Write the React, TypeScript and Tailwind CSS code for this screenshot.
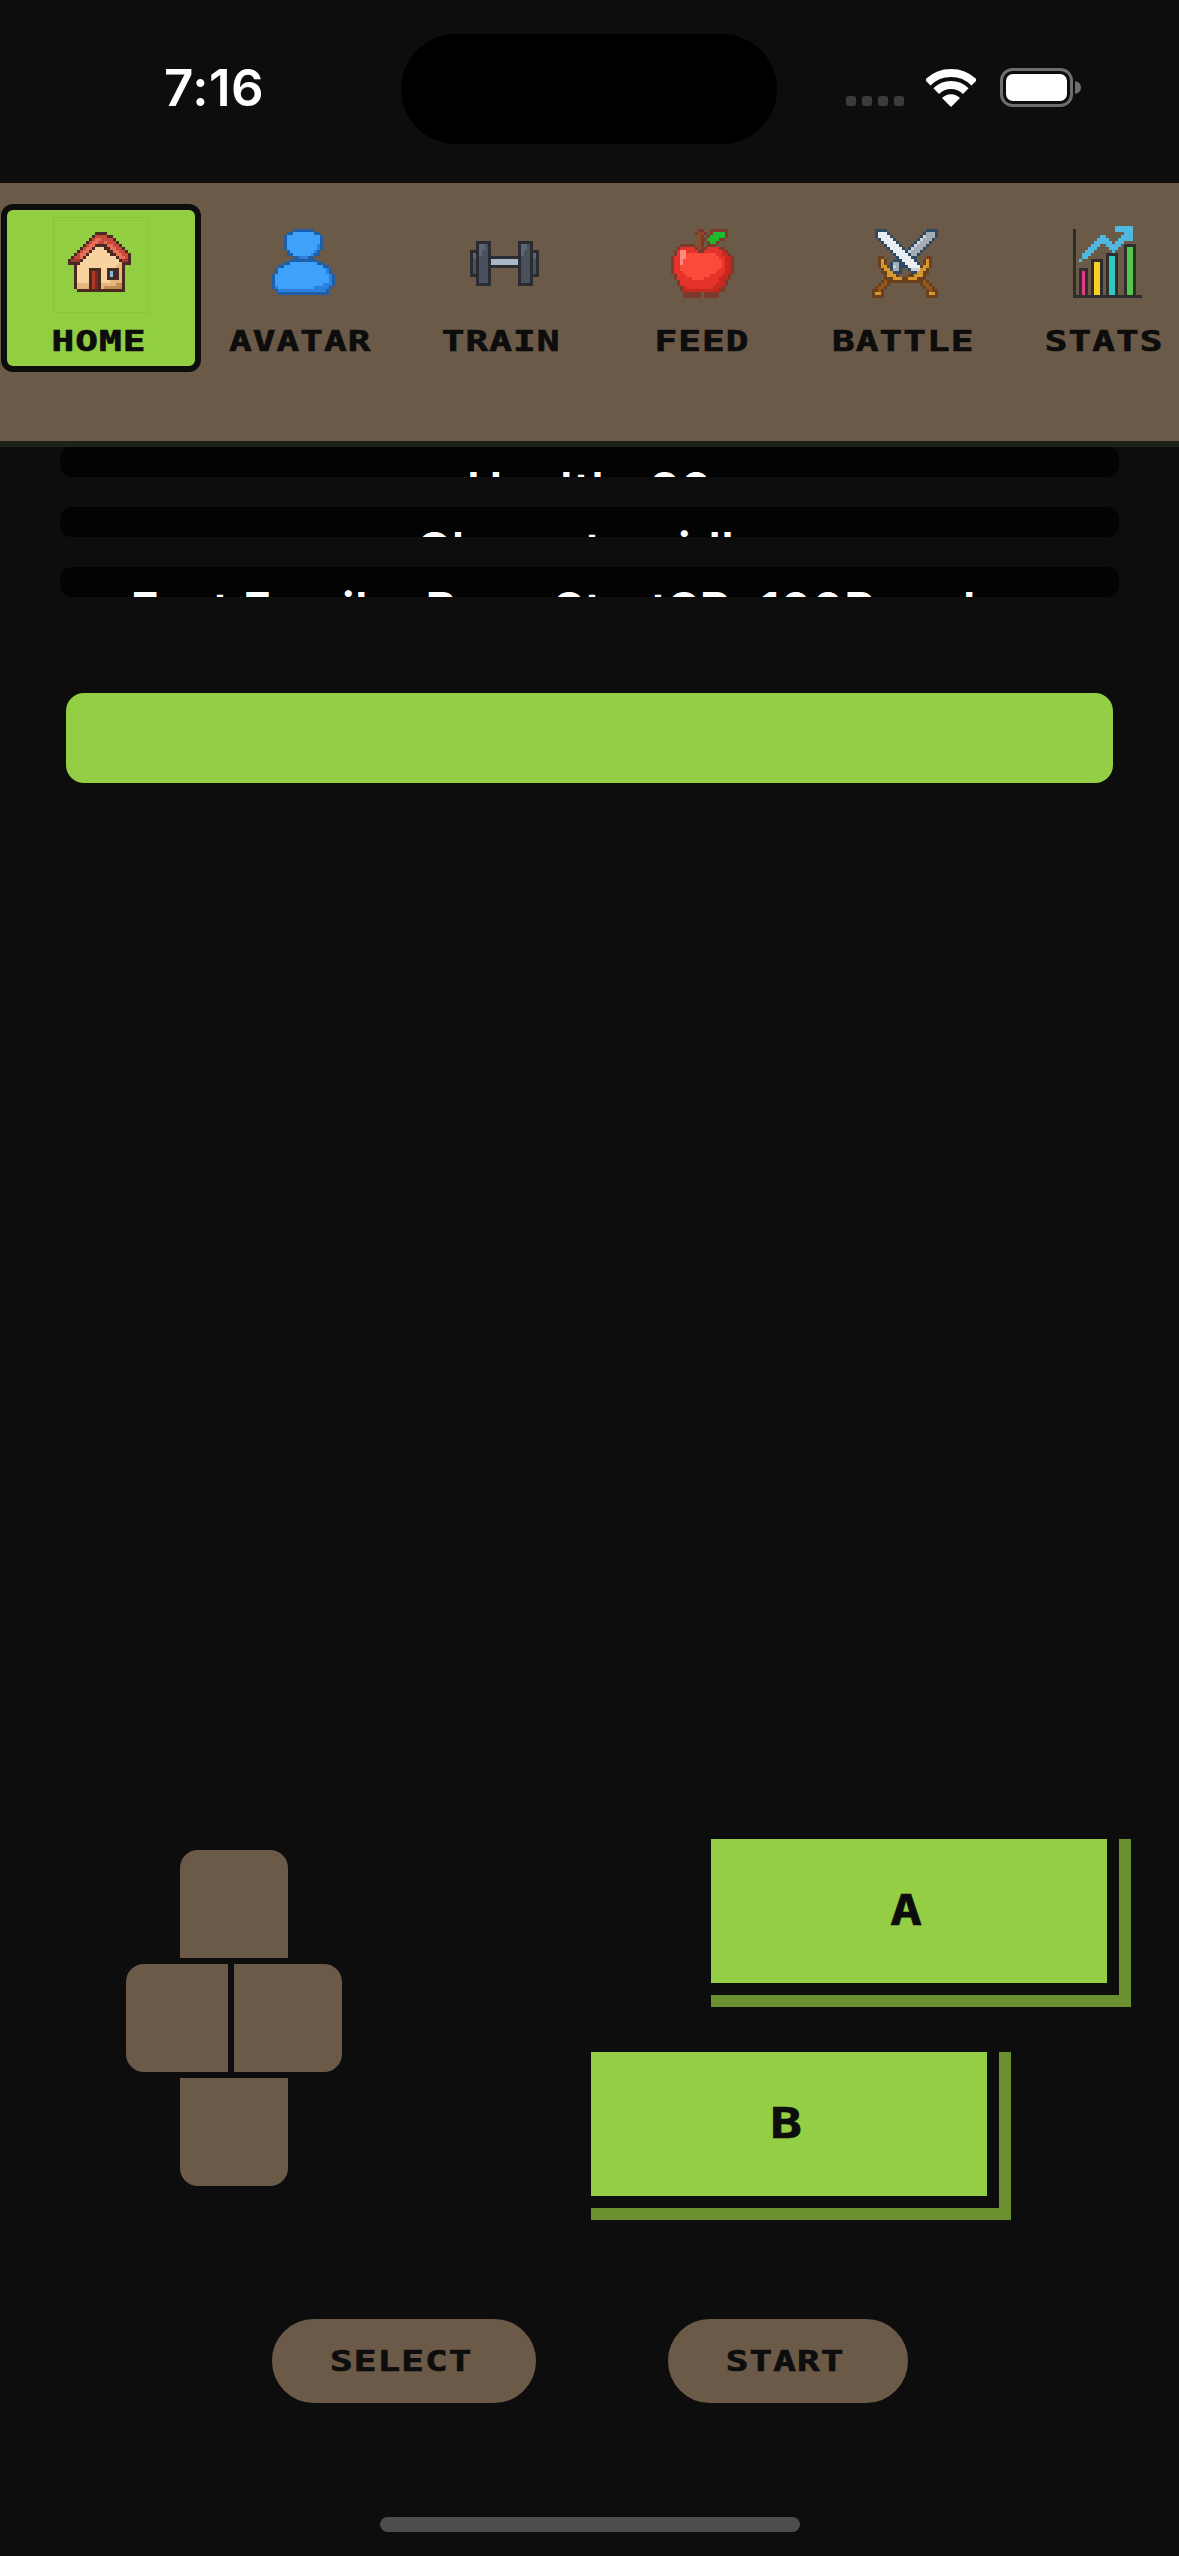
const pixelFont = "font-['DejaVu_Sans_Mono',monospace] font-bold [-webkit-text-stroke:0.7px_#0d0d0d]";

type Art = { left: number; top: number; colors: Record<string, string>; rows: string[] };

const home: Art = {
  left: 5,
  top: 5,
  colors: { k: '#4a2a20', r: '#c8493a', R: '#e8705a', d: '#9c3a2c', c: '#f8d3a0', C: '#e6b67c', b: '#c08a55', w: '#7cc0e8', D: '#b03a2a', e: '#7a2a20' },
  rows: [
    '.........kkkk........',
    '........krrrrkk......',
    '.......krRRrrrrk.....',
    '......krRRrrRrrrk....',
    '.....krRRkkkkRRrrk...',
    '....krRRkccckkRRrrk..',
    '...krRRkccccckkRRrrk.',
    '..krRRkccccccckkRRrrk',
    '.krrRkcccccccccckRRrk',
    'kdddkcccccccccccckddk',
    'kkkkcccccccccccccCkkk',
    '..kcccccccccccccCCk..',
    '..kcccckkkkcckkkkCk..',
    '..kcccckDekcckwkkCk..',
    '..kcccckDekcckwkkCk..',
    '..kcccckDekcckkkkCk..',
    '..kcccckDekcccCCCCk..',
    '..kCCCCkDekCCCCCbbk..',
    '..kCCCCkDekCbbbbbbk..',
    '...kkkkkkkkkkkkkkkk..',
  ],
};

const avatar: Art = {
  left: 6,
  top: 4,
  colors: { k: '#1e5fa8', F: '#3fa2fa', s: '#2a80dc' },
  rows: [
    '.......kkkkkkk.......',
    '.....kkFFFFFFFkk.....',
    '....kFFFFFFFFFFFk....',
    '....kFFFFFFFFFFFk....',
    '....kFFFFFFFFFFFk....',
    '....kFFFFFFFFFFsk....',
    '....kFFFFFFFFFFsk....',
    '.....kFFFFFFFFsk.....',
    '.....kkFFFFFFskk.....',
    '.......kkssskk.......',
    '......kkkkkkkkk......',
    '....kkFFFFFFFFFkk....',
    '..kkFFFFFFFFFFFFFkk..',
    '.kFFFFFFFFFFFFFFFFsk.',
    '.kFFFFFFFFFFFFFFFFsk.',
    'kFFFFFFFFFFFFFFFFFFsk',
    'kFFFFFFFFFFFFFFFFFFsk',
    'kFFFFFFFFFFFFFFFFFFsk',
    'kFFFFFFFFFFFFFFFFsssk',
    'ksFFFFFFFFFFFFsssssk.',
    '.kssssssssssssssssk..',
    '..kkkkkkkkkkkkkkkkk..',
  ],
};

const dumbbell: Art = {
  left: 5,
  top: 8,
  colors: { k: '#2a2c31', g: '#4a505c', h: '#5e6674', b: '#a8b8c8', m: '#5c6470' },
  rows: [
    '..kkkkk.........kkkkk..',
    '..khhgk.........khhgk..',
    '..khhgk.........khhgk..',
    'kkkhggk.........khggkkk',
    'kmkhggk.........khggkmk',
    'kmkgggkkkkkkkkkkkgggkmk',
    'kgkgggkbbbbbbbbbkgggkgk',
    'kgkgggkbbbbbbbbbkgggkgk',
    'kgkgggkkkkkkkkkkkgggkgk',
    'kgkgggk.........kgggkgk',
    'kgkgggk.........kgggkgk',
    'kkkgggk.........kgggkkk',
    '..kgggk.........kgggk..',
    '..kgggk.........kgggk..',
    '..kkkkk.........kkkkk..',
  ],
};

const apple: Art = {
  left: 5,
  top: 4,
  colors: { o: '#7a3a2c', S: '#8f4a26', L: '#1fb82e', r: '#e5322a', B: '#fb4a3a', W: '#fb8a80', d: '#c4281f' },
  rows: [
    '.........oo..oooooo..',
    '........oSSo.oLLLLo..',
    '.........So.oLLLLLo..',
    '.........SooLLLLoo...',
    '.........So.oLLo.....',
    '...ooooo.So.ooo......',
    '..orrrrroSoorrrroo...',
    '.orWWrrrroorrrrrrdo..',
    '.orWWBBBBBBBBBBrrddo.',
    'orrWWBBBBBBBBBBBrrddo',
    'orrWBBBBBBBBBBBBBrddo',
    'orrWBBBBBBBBBBBBBrddo',
    'orrBBBBBBBBBBBBBBrddo',
    'orrBBBBBBBBBBBBBrrddo',
    'orrrBBBBBBBBBBBrrrddo',
    '.orrrBBBBBBBBrrrrddo.',
    '.orrrrrBBBBrrrrrdddo.',
    '..orrrrrrrrrrrrrddo..',
    '..orrrrrrrrrrrrdddo..',
    '...odrrrrrrrrrdddo...',
    '...oddddddddddddoo...',
    '....oooooo.ooooo.....',
    '....oooooo.ooooo.....',
  ],
};

const swords: Art = {
  left: 5,
  top: 4,
  colors: { n: '#2f4a60', W: '#e8eef2', s: '#a4acb6', l: '#c8d0d8', O: '#d89830', B: '#6a3f1c', b: '#94561f' },
  rows: [
    '.nnnn.............nnnn.',
    '.nWWWn...........nsssn.',
    '.nWWWWn.........nlsssn.',
    '..nWWWWn.......nlsssn..',
    '...nWWWWn.....nlsssn...',
    '....nWWWWn...nlsssn....',
    '.....nWWWWn.nlsssn.....',
    '......nWWWWnlsssn......',
    '.......nWWWWnssn.......',
    '..BB....nWWWWnn...BB...',
    '..BOB..nnnWWWWn..BOB...',
    '..BOB.nssnnWWWWn.BOB...',
    '..BOOBnlsnnnWWWWBOOB...',
    '...BOOnssn..nlllOOB....',
    '...BBOOnnn...nnOOBB....',
    '....BOOOB...BBOOOB.....',
    '....BBBOOOBBOOOBBB.....',
    '...BbBBBBBBBBBBBBbB....',
    '..BbbB..........BbbB...',
    '.BbbB............BbbB..',
    'BBbB..............BbBB.',
    'BOOB..............BOOB.',
    'BBBB..............BBBB.',
  ],
};

const stats: Art = {
  left: 5,
  top: 3,
  colors: { k: '#2e2e2e', A: '#50b8e0', P: '#e83888', Y: '#f8d020', T: '#30c8c0', G: '#50c848' },
  rows: [
    '..............AAAAAA...',
    'k.............AAAAAA...',
    'k................AAA...',
    'k........AA.....AAAA...',
    'k.......AAAA...AAAAA...',
    'k......AAAAAA.AAA......',
    'k.....AAA..AAAAA.kkkk..',
    'k....AAA....AAA..kGGk..',
    'k...AAA......A...kGGk..',
    'k..AAA.....kkkk..kGGk..',
    'k..AA......kTTk..kGGk..',
    'k.A...kkkk.kTTk..kGGk..',
    'k.....kYYk.kTTk..kGGk..',
    'k.....kYYk.kTTk..kGGk..',
    'k.kkk.kYYk.kTTk..kGGk..',
    'k.kPk.kYYk.kTTk..kGGk..',
    'k.kPk.kYYk.kTTk..kGGk..',
    'k.kPk.kYYk.kTTk..kGGk..',
    'k.kPk.kYYk.kTTk..kGGk..',
    'k.kPk.kYYk.kTTk..kGGk..',
    'k.kPk.kYYk.kTTk..kGGk..',
    'k.kPk.kYYk.kTTk..kGGk..',
    'k.kPk.kYYk.kTTk..kGGk..',
    'kkkkkkkkkkkkkkkkkkkkkkk',
  ],
};

function PixelIcon({ art }: { art: Art }) {
  const cells: React.ReactNode[] = [];
  art.rows.forEach((row, y) => {
    let x = 0;
    while (x < row.length) {
      let end = x + 1;
      while (end < row.length && row[end] === row[x]) end++;
      if (row[x] !== '.') {
        cells.push(<rect key={`${y}-${x}`} x={art.left + x} y={art.top + y} width={end - x} height={1} fill={art.colors[row[x]]} />);
      }
      x = end;
    }
  });
  return (
    <svg viewBox="0 0 32 32" width="96" height="96" shapeRendering="crispEdges">
      {cells}
    </svg>
  );
}

const tabs = [
  { label: 'HOME', art: home },
  { label: 'AVATAR', art: avatar },
  { label: 'TRAIN', art: dumbbell },
  { label: 'FEED', art: apple },
  { label: 'BATTLE', art: swords },
  { label: 'STATS', art: stats },
];

const infoRows = ['Health: 80', 'Character: idle', 'Fast Family: Base StartSP: 100P and up'];

function StatusBar() {
  return (
    <div className="flex h-[183px] shrink-0 items-start">
      <div className="ml-[164px] mt-[58px] w-[237px] font-['Inter',sans-serif] text-[51px] font-semibold leading-[60px] tracking-[0.5px] text-white">7:16</div>
      <div className="mt-[34px] h-[110px] w-[376px] rounded-[55px] bg-black" />
      <div className="ml-[69px] mt-[68px] flex items-end">
        <div className="mb-[1px] flex gap-[6px]">
          <div className="h-[10px] w-[10px] rounded-[3px] bg-[#3c3c3c]" />
          <div className="h-[10px] w-[10px] rounded-[3px] bg-[#3c3c3c]" />
          <div className="h-[10px] w-[10px] rounded-[3px] bg-[#3c3c3c]" />
          <div className="h-[10px] w-[10px] rounded-[3px] bg-[#3c3c3c]" />
        </div>
        <svg className="ml-[22px]" width="50" height="38" viewBox="0 0 50 38">
          <path d="M1.7 13.7 A33 33 0 0 1 48.3 13.7" fill="none" stroke="#fff" strokeWidth="8" />
          <path d="M10.2 22.2 A21 21 0 0 1 39.8 22.2" fill="none" stroke="#fff" strokeWidth="8" />
          <path d="M25 38 L16 29 A12.5 12.5 0 0 1 34 29 Z" fill="#fff" />
        </svg>
        <svg className="ml-[24px]" width="82" height="39" viewBox="0 0 82 39">
          <rect x="1.5" y="1.5" width="70" height="36" rx="11" fill="none" stroke="#6e6e6e" strokeWidth="3" />
          <rect x="6" y="6" width="61" height="27" rx="7" fill="#fff" />
          <path d="M75 13 C79 14 81 16 81 19.5 C81 23 79 25 75 26 Z" fill="#6e6e6e" />
        </svg>
      </div>
    </div>
  );
}

function TabBar() {
  return (
    <div className="flex h-[264px] shrink-0 overflow-hidden border-b-[6px] border-[#1e2216] bg-[#6b5a48] pl-[1px] pt-[21px]">
      {tabs.map((tab, i) => (
        <div key={tab.label} className="w-[201px] shrink-0">
          <div className={`flex h-[168px] w-[200px] flex-col items-center rounded-[12px] border-[6px] pt-[7px] ${i === 0 ? 'border-[#0d0d0d] bg-[#92ce41]' : 'border-transparent'}`}>
            <div className={`h-[96px] w-[96px] ${i === 0 ? 'outline outline-1 -outline-offset-1 outline-[#8ac43f]' : ''}`}>
              <PixelIcon art={tab.art} />
            </div>
            <span className={`mt-[13px] inline-block scale-x-[1.3] pr-[3px] text-[29px] leading-[30px] tracking-[0.8px] text-[#0d0d0d] ${pixelFont}`}>{tab.label}</span>
          </div>
        </div>
      ))}
    </div>
  );
}

function DpadKey({ className }: { className: string }) {
  return <div className={`border-[6px] border-[#0d0d0d] bg-[#6b5a48] ${className}`} />;
}

function Dpad() {
  return (
    <div className="ml-[120px] mt-[5px] flex w-[228px] flex-col items-center">
      <DpadKey className="h-[120px] w-[120px] rounded-t-[24px]" />
      <div className="-mt-[6px] flex">
        <DpadKey className="h-[120px] w-[114px] rounded-l-[24px]" />
        <DpadKey className="-ml-[6px] h-[120px] w-[120px] rounded-r-[24px]" />
      </div>
      <DpadKey className="-mt-[6px] h-[120px] w-[120px] rounded-b-[24px]" />
    </div>
  );
}

function ActionButton({ label, className }: { label: string; className?: string }) {
  return (
    <div className={`border-b-[12px] border-r-[12px] border-[#6b9030] ${className ?? ''}`}>
      <div className="border-b-[12px] border-r-[12px] border-[#0d0d0d]">
        <div className="flex h-[144px] w-[396px] items-center justify-center bg-[#94ce44]">
          <span className={`inline-block scale-x-[1.25] pr-[4px] text-[42px] leading-none text-[#0d0d0d] ${pixelFont}`}>{label}</span>
        </div>
      </div>
    </div>
  );
}

function PillButton({ label, width }: { label: string; width: string }) {
  return (
    <div className={`flex h-[96px] items-center justify-center rounded-full border-[6px] border-[#0d0d0d] bg-[#6b5a48] ${width}`}>
      <span className={`inline-block scale-x-[1.3] pr-[3px] text-[29px] leading-[30px] tracking-[0.8px] text-[#0d0d0d] ${pixelFont}`}>{label}</span>
    </div>
  );
}

export default function App() {
  return (
    <main className="flex h-[2556px] w-[1179px] flex-col overflow-hidden bg-[#0d0d0d]">
      <StatusBar />
      <TabBar />

      {/* clipped info rows */}
      <div className="flex flex-col gap-[30px] px-[60px]">
        {infoRows.map((row) => (
          <div key={row} className="h-[30px] overflow-hidden rounded-[12px] bg-[#030303] pt-[13px] text-center font-['Inter',sans-serif] text-[48px] font-semibold leading-[60px] tracking-[0.4px] text-white">
            {row}
          </div>
        ))}
      </div>

      <div className="mx-[60px] mt-[90px] h-[102px] rounded-[24px] border-[6px] border-[#0d0d0d] bg-[#94ce44]" />

      {/* controls */}
      <div className="mt-[1050px] flex items-start justify-between">
        <Dpad />
        <div className="flex flex-col items-end gap-[45px] pr-[48px]">
          <ActionButton label="A" />
          <ActionButton label="B" className="mr-[120px]" />
        </div>
      </div>

      <div className="mt-[93px] flex justify-center gap-[120px]">
        <PillButton label="SELECT" width="w-[276px]" />
        <PillButton label="START" width="w-[252px]" />
      </div>

      <div className="mx-auto mt-[108px] h-[15px] w-[420px] rounded-full bg-[#4d4d4d]" />
    </main>
  );
}
